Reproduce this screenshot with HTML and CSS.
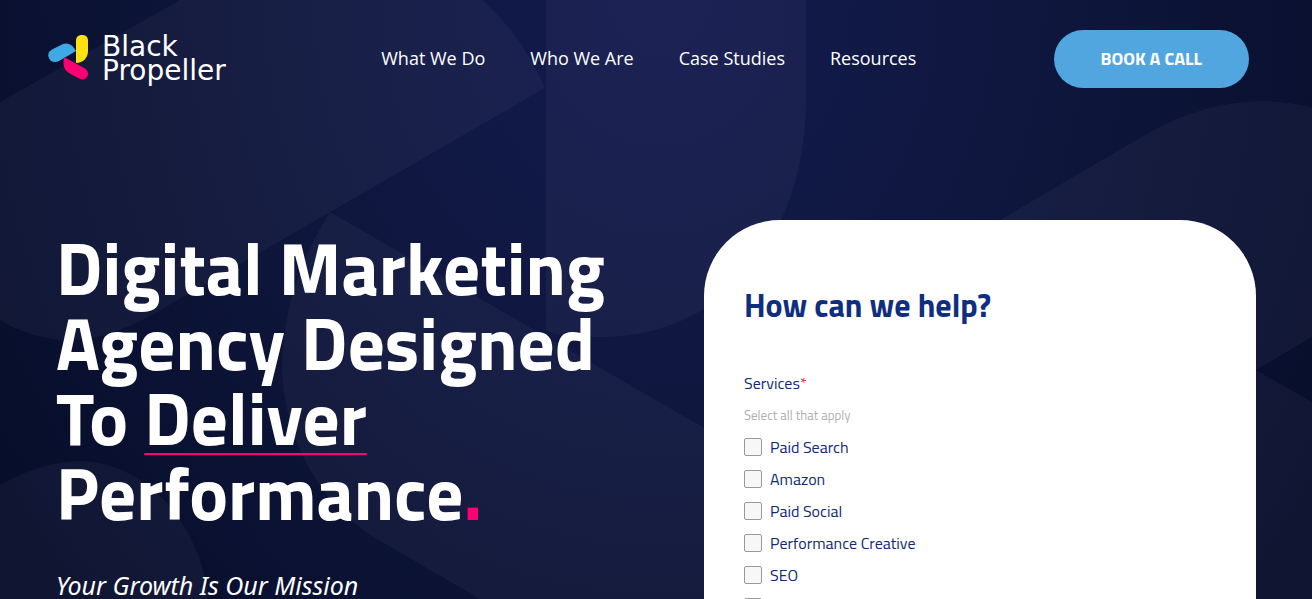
FILE: index.html
```html
<!DOCTYPE html>
<html lang="en">
<head>
    <meta charset="UTF-8">
    <meta name="viewport" content="width=device-width, initial-scale=1.0">
    <title>Black Propeller</title>
    <link rel="stylesheet" href="styles.css">
</head>
<body>

<div class="page">
    <!-- Propeller shapes behind the hero -->
    <svg class="bg-shapes" viewBox="0 0 1312 599" preserveAspectRatio="xMidYMin slice" aria-hidden="true">
        <path d="M180 0 L0 102 V320 Q50 350 105 335 Q130 327 150 316 L545 88 C530 55 510 24 482 0 Z"/>
        <path d="M546 0 H806 V100 C806 230 730 337 600 337 Q570 337 546 332 Z"/>
        <path d="M330 212 C300 260 282 310 282 372 C286 440 315 495 370 535 L480 599 H760 V460 Z"/>
        <path d="M1000 220 L1150 132 Q1230 88 1312 107 V337 L1256 370 L1312 402 V599 H900 V278 Z"/>
        <path d="M0 485 Q80 440 140 480 C185 510 205 560 208 599 H0 Z"/>
    </svg>

    <header class="header">
        <a class="logo" href="#" aria-label="Black Propeller">
            <svg class="logo-mark" viewBox="0 0 42 50" aria-hidden="true">
                <path fill="#3fa9e5" d="M1 24 C-1 20 1 17 5 15 L15 10 C20 8 25 11 28 17 L11 27 C7 29 2 28 1 24 Z"/>
                <path fill="#fbe012" d="M28 29 V7 C28 3 30 1 34 1 C38 1 40 3 40 7 V17 C40 24 35 29 28 29 Z"/>
                <path fill="#ff0073" d="M16 23 L36 34 C40 36 41 40 39 43 C37 46 34 46 30 44 L21 39 C15 35 15 30 16 23 Z"/>
            </svg>
            <span class="logo-text">Black<br>Propeller</span>
        </a>
        <nav class="nav">
            <ul>
                <li><a href="#">What We Do</a></li>
                <li><a href="#">Who We Are</a></li>
                <li><a href="#">Case Studies</a></li>
                <li><a href="#">Resources</a></li>
            </ul>
        </nav>
        <a class="btn" href="#">BOOK A CALL</a>
    </header>

    <main class="hero">
        <div class="hero-text">
            <h1>Digital Marketing Agency Designed To <span class="underline">Deliver</span> Performance<span class="dot">.</span></h1>
            <p class="tagline">Your Growth Is Our Mission</p>
        </div>

        <form class="card">
            <h2>How can we help?</h2>
            <fieldset>
                <legend>Services<span class="required">*</span></legend>
                <p class="hint">Select all that apply</p>
                <label class="check"><input type="checkbox" name="services">Paid Search</label>
                <label class="check"><input type="checkbox" name="services">Amazon</label>
                <label class="check"><input type="checkbox" name="services">Paid Social</label>
                <label class="check"><input type="checkbox" name="services">Performance Creative</label>
                <label class="check"><input type="checkbox" name="services">SEO</label>
                <label class="check"><input type="checkbox" name="services" aria-label="Other"></label>
            </fieldset>
        </form>
    </main>
</div>

</body>
</html>
```
FILE: styles.css
```css
* {
    box-sizing: border-box;
}
body {
    margin: 0;
    font-family: "Titillium Web", "Noto Sans", sans-serif;
    color: white;
    background-color: #070d28;
}
.page {
    position: relative;
    height: 100vh;
    overflow: hidden;
    background: radial-gradient(ellipse 780px 900px at 660px 0, #131b4e 0%, #0f173f 45%, #070e2a 100%);
}
.bg-shapes {
    position: absolute;
    top: 0;
    left: 0;
    width: 100%;
    height: 100%;
    fill: rgba(255, 240, 250, 0.04);
}
.header {
    position: relative;
    display: flex;
    align-items: center;
    justify-content: space-between;
    padding: 30px 63px 0 48px;
}
.logo {
    display: flex;
    align-items: center;
    gap: 12px;
    min-width: 200px;
    color: white;
    text-decoration: none;
}
.logo-mark {
    width: 42px;
    height: 50px;
}
.logo-text {
    font-family: "DejaVu Sans", sans-serif;
    font-size: 28px;
    line-height: 24px;
}
.nav ul {
    display: flex;
    gap: 45px;
    margin: 0;
    padding: 0 4px 2px 0;
    list-style: none;
}
.nav a {
    color: white;
    font-family: "Open Sans", sans-serif;
    font-size: 18px;
    font-weight: 500;
    text-decoration: none;
}
.btn {
    padding: 0 47px;
    border-radius: 29px;
    background-color: #51a6e0;
    color: white;
    font-size: 18px;
    font-weight: 700;
    line-height: 58px;
    text-decoration: none;
}
.hero {
    position: relative;
    display: grid;
    grid-template-columns: 1fr 552px;
    gap: 72px;
    padding: 132px 56px 0;
}
h1 {
    margin: 10px 0 0;
    font-size: 73px;
    font-weight: 700;
    line-height: 75px;
}
.underline {
    text-decoration: underline #ff0073 2px;
    text-decoration-skip-ink: none;
    text-underline-offset: 8px;
}
.dot {
    color: #ff0073;
}
.tagline {
    margin: 37px 0 0;
    font-family: "Noto Sans", sans-serif;
    font-size: 25px;
    font-style: italic;
    line-height: 36px;
}
.card {
    padding: 64px 40px 0;
    border-radius: 76px 76px 0 0;
    background-color: white;
    color: #0f2c6e;
}
.card h2 {
    margin: 0 0 48px;
    color: #102e80;
    font-size: 32px;
    line-height: 43px;
}
fieldset {
    margin: 0;
    padding: 0;
    border: none;
}
legend {
    padding: 0;
    font-size: 16px;
    line-height: 16px;
}
.required {
    color: #f02a3c;
}
.hint {
    margin: 8px 0 0;
    color: #b0b0b0;
    font-size: 13px;
    line-height: 32px;
}
.check {
    display: flex;
    align-items: center;
    gap: 8px;
    height: 32px;
    font-size: 16px;
}
.check input {
    width: 18px;
    height: 18px;
    margin: 0;
    appearance: none;
    border: 1px solid #999;
    border-radius: 2px;
    background-color: #f5f8fa;
}
```
